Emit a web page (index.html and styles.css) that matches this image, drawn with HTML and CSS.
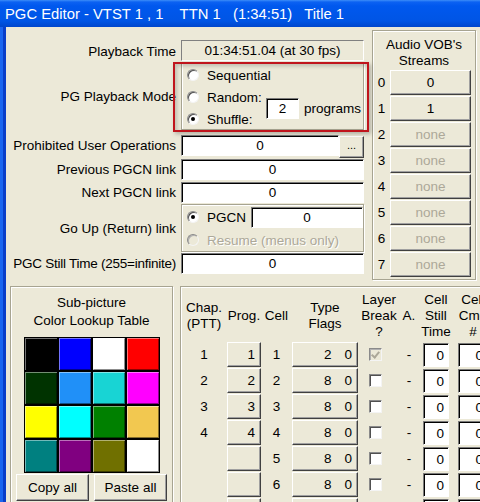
FILE: index.html
```html
<!DOCTYPE html>
<html lang="en">
<head>
  <meta charset="UTF-8">
  <title>PGC Editor</title>
  <link rel="stylesheet" href="styles.css">
</head>
<body>
  <div class="window">
    <div class="titlebar">PGC Editor - VTST 1 , 1    TTN 1   (1:34:51)   Title 1</div>
    <div class="frame">
      <div class="client">
        <div class="top">
          <!-- general PGC fields -->
          <div class="form">
            <div class="label">Playback Time</div>
            <div class="static">01:34:51.04 (at 30 fps)</div>

            <div class="label">PG Playback Mode</div>
            <div class="group mode">
              <div class="opt opt-1"><span class="radio"></span>Sequential</div>
              <div class="opt opt-2"><span class="radio"></span>Random:</div>
              <div class="opt opt-3"><span class="radio on"></span>Shuffle:</div>
              <div class="programs"><span class="edit small">2</span>programs</div>
            </div>

            <div class="label gap5">Prohibited User Operations</div>
            <div class="row gap5"><span class="edit wide">0</span><span class="btn dots">...</span></div>

            <div class="label gap3">Previous PGCN link</div>
            <div class="row gap3"><span class="edit wide">0</span></div>

            <div class="label gap2">Next PGCN link</div>
            <div class="row gap2"><span class="edit wide">0</span></div>

            <div class="label gap1">Go Up (Return) link</div>
            <div class="group goup gap1">
              <div class="opt"><span class="radio on"></span>PGCN<span class="edit pgcn">0</span></div>
              <div class="opt off"><span class="radio"></span>Resume (menus only)</div>
            </div>

            <div class="label gap1 narrow">PGC Still Time (255=infinite)</div>
            <div class="row gap1"><span class="edit wide">0</span></div>
          </div>

          <!-- audio streams -->
          <div class="group audio">
            <div class="audio-title">Audio VOB's<br>Streams</div>
            <div class="stream"><span class="num">0</span><span class="btn">0</span></div>
            <div class="stream"><span class="num">1</span><span class="btn">1</span></div>
            <div class="stream"><span class="num">2</span><span class="btn off">none</span></div>
            <div class="stream"><span class="num">3</span><span class="btn off">none</span></div>
            <div class="stream"><span class="num">4</span><span class="btn off">none</span></div>
            <div class="stream"><span class="num">5</span><span class="btn off">none</span></div>
            <div class="stream"><span class="num">6</span><span class="btn off">none</span></div>
            <div class="stream"><span class="num">7</span><span class="btn off">none</span></div>
          </div>
        </div>

        <div class="bottom">
          <!-- sub-picture palette -->
          <div class="group clut">
            <div class="clut-title">Sub-picture<br>Color Lookup Table</div>
            <div class="swatches">
              <span class="sw c-black"></span><span class="sw c-blue"></span><span class="sw c-white"></span><span class="sw c-red"></span>
              <span class="sw c-dkgreen"></span><span class="sw c-sky"></span><span class="sw c-teal2"></span><span class="sw c-magenta"></span>
              <span class="sw c-yellow"></span><span class="sw c-cyan"></span><span class="sw c-green"></span><span class="sw c-gold"></span>
              <span class="sw c-teal"></span><span class="sw c-purple"></span><span class="sw c-olive"></span><span class="sw c-white"></span>
            </div>
            <div class="clut-btns"><span class="btn">Copy all</span><span class="btn">Paste all</span></div>
          </div>

          <!-- cells table -->
          <div class="group cells">
            <div class="grid">
              <div class="hd">Chap.<br>(PTT)</div>
              <div class="hd">Prog.</div>
              <div class="hd">Cell</div>
              <div class="hd">Type<br>Flags</div>
              <div class="hd">Layer<br>Break<br>?</div>
              <div class="hd">A.</div>
              <div class="hd">Cell<br>Still<br>Time</div>
              <div class="hd">Cell<br>Cmd<br>#</div>
            </div>
            <div class="grid" id="cell-rows"></div>
          </div>
        </div>

        <div class="mark"></div>
      </div>
    </div>
  </div>

  <script>
    // 7 cells, the first 4 are chapter starts
    const rows = document.getElementById("cell-rows");
    const typeFlags = [2, 8, 8, 8, 8, 8, 8];
    for (let i = 0; i < 7; i++) {
      const chap = i < 4 ? i + 1 : "";
      const check = i === 0 ? '<span class="check off on"></span>' : '<span class="check"></span>';
      rows.innerHTML +=
        `<div class="c">${chap}</div>` +
        `<span class="btn prog">${chap}</span>` +
        `<div class="c">${i + 1}</div>` +
        `<span class="btn type"><span>${typeFlags[i]}</span><span>0</span></span>` +
        `<div class="c lb">${check}</div>` +
        `<div class="c">-</div>` +
        `<div class="c"><span class="edit num-in">0</span></div>` +
        `<div class="c cmd"><span class="edit num-in cmd-in">0</span></div>`;
    }
  </script>
</body>
</html>
```

FILE: styles.css
```css
body {
  margin: 0;
  overflow: hidden;
  background: #ece9d8;
  font-family: "Liberation Sans", Arial, sans-serif;
  font-size: 13.5px;
  color: #000;
}

.window {
  width: 520px;
  height: 540px;
  overflow: hidden;
}

.titlebar {
  height: 27px;
  box-sizing: border-box;
  padding: 5px 0 0 5px;
  line-height: 19px;
  font-size: 14.8px;
  color: #fff;
  white-space: pre;
  background: linear-gradient(#3d8df8 0, #0c62f2 2px, #0058ee 6px, #0055e5 21px, #0046cc 27px);
}

.frame {
  display: flex;
  padding-left: 6px;
  background: linear-gradient(to right, #1b66ef 0, #1b66ef 3px, #0a3fc9 3px, #0a3fc9 6px, #ece9d8 6px);
}

.client {
  flex: 1;
  position: relative;
  background: #ece9d8;
  height: 520px;
}

/* shared win32 looking controls */
.edit {
  display: flex;
  align-items: center;
  justify-content: center;
  box-sizing: border-box;
  height: 21px;
  background: #fff;
  border: 1px solid;
  border-color: #7a7a7a #fff #fff #7a7a7a;
  box-shadow: inset 1px 1px #000;
}

.btn {
  display: flex;
  align-items: center;
  justify-content: center;
  box-sizing: border-box;
  background: #ece9d8;
  border: 1px solid;
  border-color: #fff #404040 #404040 #fff;
  box-shadow: inset -1px -1px #a0a0a0;
}

.btn.off {
  color: #aca899;
}

.opt.off {
  color: #aca899;
  text-shadow: 1px 1px #fff;
}

.group {
  box-sizing: border-box;
  border: 1px solid #a7a491;
  box-shadow: inset 1px 1px #fff, 1px 1px #fff;
}

.radio {
  position: relative;
  width: 12px;
  height: 12px;
  margin-right: 8px;
  box-sizing: border-box;
  border-radius: 50%;
  background: #fff;
  border: 1px solid;
  border-color: #8a8a8a #f4f4f4 #f4f4f4 #8a8a8a;
  box-shadow: inset 1px 1px #505050;
  flex-shrink: 0;
}

.radio.on::after {
  content: "";
  position: absolute;
  left: 3px;
  top: 3px;
  width: 4px;
  height: 4px;
  border-radius: 50%;
  background: #000;
}

.opt.off .radio {
  background: #ece9d8;
  box-shadow: inset 1px 1px #b0b0b0;
}

/* top part */
.top {
  display: flex;
  align-items: flex-start;
}

.form {
  display: grid;
  grid-template-columns: 170px 183px;
  column-gap: 5px;
  margin-top: 13px;
}

.label {
  align-self: center;
  text-align: right;
  white-space: nowrap;
}

.label.narrow {
  letter-spacing: -0.25px;
}

.gap1 { margin-top: 1px; }
.gap2 { margin-top: 2px; }
.gap3 { margin-top: 3px; }
.gap5 { margin-top: 5px; }

.static {
  height: 21px;
  margin-bottom: 1px;
  box-sizing: border-box;
  display: flex;
  align-items: center;
  justify-content: center;
  border: 1px solid;
  border-color: #808080 #fff #fff #808080;
}

.row {
  display: flex;
  height: 21px;
}

.edit.wide {
  flex: 1;
}

.dots {
  width: 25px;
  height: 22px;
  margin-top: 1px;
  font-size: 11px;
  padding-bottom: 4px;
}

.mode {
  height: 68px;
  display: grid;
  grid-template-columns: 79px auto;
  grid-template-rows: 22px 22px 22px;
  padding: 1px 0 0 5px;
}

.opt {
  display: flex;
  align-items: center;
  white-space: nowrap;
}

.opt-1 { grid-row: 1; }
.opt-2 { grid-row: 2; }
.opt-3 { grid-row: 3; }

.programs {
  grid-column: 2;
  grid-row: 2 / 4;
  display: flex;
  align-items: center;
  gap: 5px;
}

.edit.small {
  width: 33px;
  height: 21px;
}

.goup {
  height: 48px;
  padding-left: 5px;
  display: grid;
  grid-template-rows: 24px 22px;
}

.edit.pgcn {
  width: 112px;
  margin-left: 5px;
}

.audio {
  width: 104px;
  height: 250px;
  margin: 3px 0 0 8px;
  padding-top: 6px;
}

.audio-title {
  text-align: center;
  line-height: 16px;
  margin-bottom: 1px;
}

.stream {
  display: flex;
  height: 26px;
}

.stream .num {
  width: 17px;
  text-align: center;
  line-height: 25px;
}

.stream .btn {
  width: 81px;
  height: 25px;
}

/* bottom part */
.bottom {
  display: flex;
  gap: 7px;
  margin-top: 6px;
  padding-left: 4px;
}

.clut {
  width: 163px;
  height: 240px;
  padding-top: 7px;
}

.clut-title {
  text-align: center;
  line-height: 18px;
}

.swatches {
  display: grid;
  grid-template-columns: repeat(4, 34px);
  grid-auto-rows: 34px;
  margin: 7px 0 0 13px;
}

.sw {
  border: 1px solid #000;
  box-shadow: inset 1px 1px rgba(255, 255, 255, 0.45), inset -1px -1px rgba(0, 0, 0, 0.45);
}

.c-black { background: #000; }
.c-blue { background: #0000ff; }
.c-white { background: #fff; }
.c-red { background: #ff0000; }
.c-dkgreen { background: #003300; }
.c-sky { background: #2090f8; }
.c-teal2 { background: #18d4d4; }
.c-magenta { background: #ff00ff; }
.c-yellow { background: #ffff00; }
.c-cyan { background: #00ffff; }
.c-green { background: #008000; }
.c-gold { background: #f2c850; }
.c-teal { background: #008080; }
.c-purple { background: #800080; }
.c-olive { background: #707000; }

.clut-btns {
  display: flex;
  gap: 5px;
  margin: 1px 0 0 5px;
}

.clut-btns .btn {
  width: 73px;
  height: 27px;
}

.cells {
  width: 320px;
  height: 240px;
  padding-top: 5px;
}

.grid {
  display: grid;
  grid-template-columns: 46px 34px 31px 66px 42px 18px 36px 38px;
}

.hd {
  height: 48px;
  display: flex;
  align-items: center;
  justify-content: center;
  text-align: center;
  line-height: 16px;
  white-space: nowrap;
}

#cell-rows {
  margin-top: 2px;
  grid-auto-rows: 26px;
}

.c {
  display: flex;
  justify-content: center;
  align-items: flex-start;
  line-height: 25px;
}

.btn.prog,
.btn.type {
  height: 25px;
  justify-content: flex-end;
  padding-right: 5px;
}

.btn.type {
  gap: 13px;
}

.c.lb {
  justify-content: flex-start;
  padding: 6px 0 0 11px;
  box-sizing: border-box;
}

.check {
  position: relative;
  width: 13px;
  height: 13px;
  box-sizing: border-box;
  background: #fff;
  border: 1px solid;
  border-color: #8a8a8a #f4f4f4 #f4f4f4 #8a8a8a;
  box-shadow: inset 1px 1px #505050;
}

.check.off {
  background: #ece9d8;
  box-shadow: inset 1px 1px #b0b0b0;
}

.check.on::after {
  content: "";
  position: absolute;
  left: 3px;
  top: 1px;
  width: 3px;
  height: 6px;
  border: solid #aca899;
  border-width: 0 2px 2px 0;
  transform: rotate(40deg);
}

.edit.num-in {
  width: 26px;
  height: 24px;
  justify-content: flex-end;
  padding-right: 4px;
  margin-top: 1px;
}

.c.cmd {
  justify-content: flex-start;
  padding-left: 4px;
}

.edit.cmd-in {
  width: 30px;
}

/* red highlight drawn over the playback mode group */
.mark {
  position: absolute;
  left: 167px;
  top: 35px;
  width: 196px;
  height: 70px;
  box-sizing: border-box;
  border: 2px solid #c0141c;
  box-shadow: 2px 2px 4px rgba(0, 0, 0, 0.25), inset 2px 2px 4px rgba(0, 0, 0, 0.2);
}
```
